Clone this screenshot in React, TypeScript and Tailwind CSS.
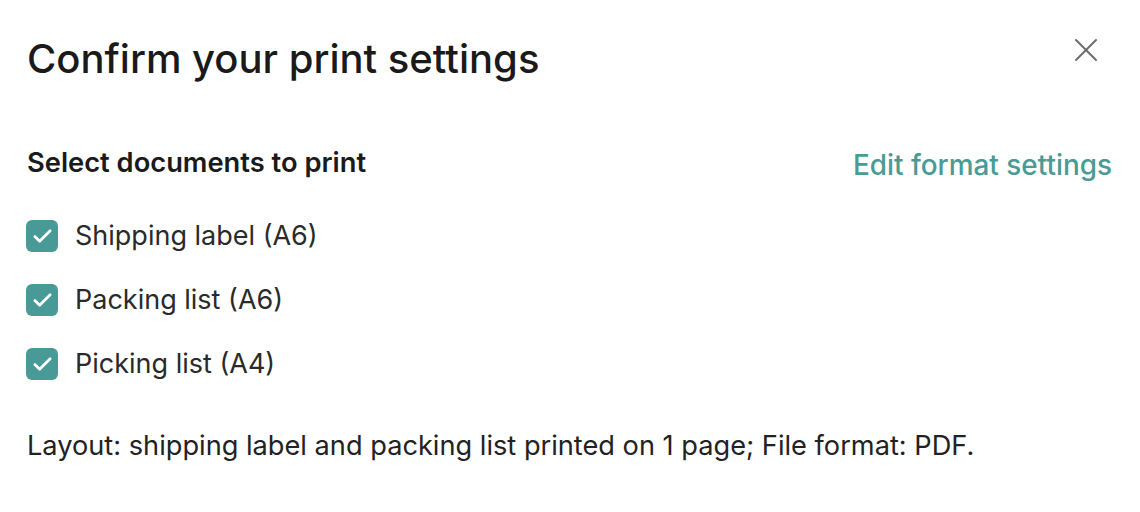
import { Check, X } from "lucide-react";

const docs = ["Shipping label (A6)", "Packing list (A6)", "Picking list (A4)"];

export default function App() {
  return (
    <div className="w-[1140px] h-[512px] bg-white text-[#222] font-['Inter',sans-serif] overflow-hidden">
      <div className="flex items-start justify-between pl-[27px] pr-[28px] pt-[34px]">
        <h1 className="text-[40px] leading-[50px] font-medium text-[#1a1a1a]">
          Confirm your print settings
        </h1>
        <button className="mt-[-4px] mr-[6px] text-[#6b6b6b]">
          <X size={40} strokeWidth={1.2} />
        </button>
      </div>

      {/* encabezado + link */}
      <div className="flex items-start justify-between pl-[27px] pr-[28px] mt-[62px]">
        <h2 className="text-[27.3px] leading-[34px] font-semibold text-[#1a1a1a]">Select documents to print</h2>
        <a className="text-[27.9px] leading-[34px] font-medium text-[#4a9a95] cursor-pointer mt-[2px]">Edit format settings</a>
      </div>

      <div className="flex flex-col gap-[32px] pl-[26px] mt-[38px]">
        {docs.map((d) => (
          <label key={d} className="flex items-center gap-[17px]">
            <span className="w-[32px] h-[32px] rounded-[6px] bg-[#479a95] flex items-center justify-center text-white">
              <Check size={23} strokeWidth={2.8} />
            </span>
            <span className="text-[27px] leading-[32px] text-[#2a2a2a]">{d}</span>
          </label>
        ))}
      </div>

      <p className="pl-[27px] mt-[49px] text-[27.2px] leading-[34px] text-[#222]">
        Layout: shipping label and packing list printed on 1 page; File format: PDF.
      </p>
    </div>
  );
}
